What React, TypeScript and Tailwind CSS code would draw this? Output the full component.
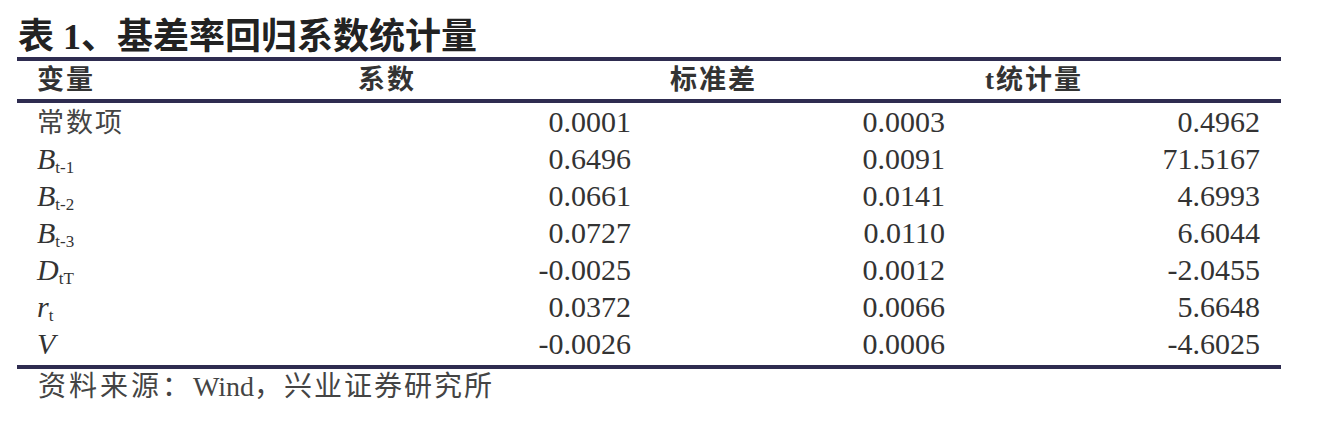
import React from "react";

// 表格数据
const rows: { v: React.ReactNode; coef: string; se: string; t: string }[] = [
  { v: <span className="font-['Noto_Sans_CJK_SC',sans-serif] text-[27px] tracking-[2px] text-[#444]">常数项</span>, coef: "0.0001", se: "0.0003", t: "0.4962" },
  { v: <Sym base="B" sub="t-1" />, coef: "0.6496", se: "0.0091", t: "71.5167" },
  { v: <Sym base="B" sub="t-2" />, coef: "0.0661", se: "0.0141", t: "4.6993" },
  { v: <Sym base="B" sub="t-3" />, coef: "0.0727", se: "0.0110", t: "6.6044" },
  { v: <Sym base="D" sub="tT" />, coef: "-0.0025", se: "0.0012", t: "-2.0455" },
  { v: <Sym base="r" sub="t" />, coef: "0.0372", se: "0.0066", t: "5.6648" },
  { v: <Sym base="V" sub="" />, coef: "-0.0026", se: "0.0006", t: "-4.6025" },
];

function Sym({ base, sub }: { base: string; sub: string }) {
  return (
    <span className="font-['Liberation_Serif',serif] text-[#333]">
      <span className="italic text-[30px]">{base}</span>
      {sub && <span className="relative top-[4px] text-[17px]">{sub}</span>}
    </span>
  );
}

const line = "h-[4px] w-full bg-[#2e2c50]";

export default function App() {
  return (
    <div className="w-[1326px] h-[422px] bg-white overflow-hidden">
      {/* 标题 */}
      <div className="h-[57px] pt-[17px] pl-[18px] flex items-center">
        <h1 className="font-['Liberation_Serif','Noto_Sans_CJK_SC',serif] text-[36px] font-bold leading-none text-[#222] whitespace-nowrap">
          表 1、基差率回归系数统计量
        </h1>
      </div>

      <div className="ml-[17px] w-[1264px]">
        <div className={line} />

        {/* 表头 */}
        <div className="h-[38px] grid grid-cols-[303px_311px_314px_336px] items-center font-['Liberation_Serif','Noto_Sans_CJK_SC',serif] text-[27px] font-bold tracking-[2px] text-[#333] leading-none">
          <div className="pl-[20px]">变量</div>
          <div className="pl-[38px]">系数</div>
          <div className="pl-[39px]">标准差</div>
          <div className="pl-[40px]">t统计量</div>
        </div>

        <div className={line} />

        {/* 数据行 */}
        <div className="pb-[3px]">
          {rows.map((r, i) => (
            <div
              key={i}
              className="h-[37px] grid grid-cols-[303px_311px_314px_336px] items-center font-['Liberation_Serif',serif] text-[30px] text-[#333] leading-none"
            >
              <div className="pl-[20px]">{r.v}</div>
              <div className="text-right">{r.coef}</div>
              <div className="text-right">{r.se}</div>
              <div className="text-right pr-[21px]">{r.t}</div>
            </div>
          ))}
        </div>

        <div className={line} />
      </div>

      {/* 资料来源 */}
      <div className="h-[36px] pl-[38px] flex items-center font-['Liberation_Serif','Noto_Sans_CJK_SC',serif] text-[28px] text-[#444] leading-none whitespace-nowrap">
        <span className="tracking-[3px]">资料来源：</span>
        <span>Wind</span>
        <span className="tracking-[2px]">，兴业证券研究所</span>
      </div>
    </div>
  );
}
